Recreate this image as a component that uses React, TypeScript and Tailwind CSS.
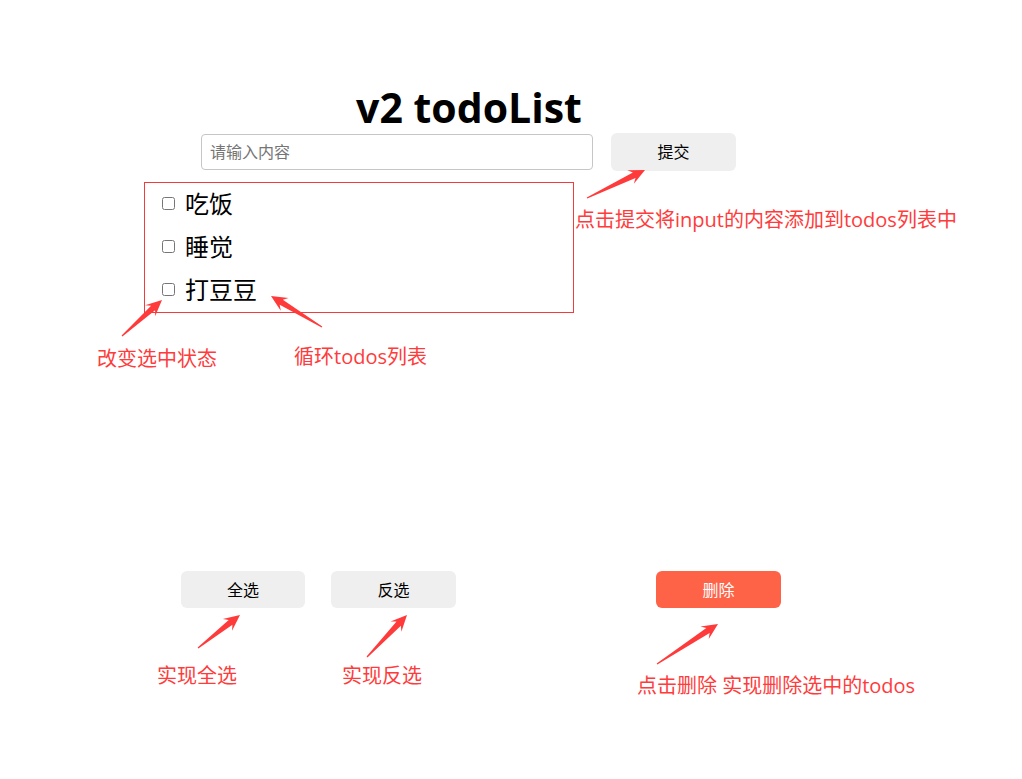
import React, { useState } from 'react';

type Todo = { id: number; text: string; done: boolean };

// annotation arrows: tail -> tip
const ARROWS: [number, number, number, number][] = [
  [587, 198, 645, 170],
  [122, 336, 162, 300],
  [322, 327, 271, 296],
  [198, 648, 240, 615],
  [367, 657, 407, 615],
  [657, 664, 718, 624],
];

function arrowPoints(x1: number, y1: number, x2: number, y2: number) {
  const len = Math.hypot(x2 - x1, y2 - y1);
  const dx = (x2 - x1) / len;
  const dy = (y2 - y1) / len;
  const nx = -dy;
  const ny = dx;
  const pt = (bx: number, by: number, off: number) => `${bx + nx * off},${by + ny * off}`;
  const b1x = x2 - dx * 12;
  const b1y = y2 - dy * 12;
  const b2x = x2 - dx * 16;
  const b2y = y2 - dy * 16;
  return [
    pt(x1, y1, 0.6),
    pt(b1x, b1y, 3),
    pt(b2x, b2y, 7.5),
    `${x2},${y2}`,
    pt(b2x, b2y, -7.5),
    pt(b1x, b1y, -3),
    pt(x1, y1, -0.6),
  ].join(' ');
}

const font = { fontFamily: '"Open Sans", "Noto Sans CJK SC", sans-serif' };

export default function App() {
  const [todos, setTodos] = useState<Todo[]>([
    { id: 1, text: '吃饭', done: false },
    { id: 2, text: '睡觉', done: false },
    { id: 3, text: '打豆豆', done: false },
  ]);
  const [value, setValue] = useState('');

  const add = () => {
    if (!value.trim()) return;
    setTodos([...todos, { id: Date.now(), text: value, done: false }]);
    setValue('');
  };
  const toggle = (id: number) =>
    setTodos(todos.map(t => (t.id === id ? { ...t, done: !t.done } : t)));
  const selectAll = () => setTodos(todos.map(t => ({ ...t, done: true })));
  const invert = () => setTodos(todos.map(t => ({ ...t, done: !t.done })));
  const remove = () => setTodos(todos.filter(t => !t.done));

  return (
    <div className="relative w-[1022px] h-[779px] bg-white text-black" style={font}>
      <div className="pt-[83px]">
        <h1 className="w-[938px] text-center text-[41px] leading-[48px] font-bold">v2 todoList</h1>

        <div className="flex items-center gap-[18px] pl-[201px] mt-[2px]">
          <input
            value={value}
            onChange={e => setValue(e.target.value)}
            placeholder="请输入内容"
            className="w-[392px] h-[36px] border border-[#c6c6c6] rounded-[4px] px-[8px] text-[16px] placeholder:text-[#757575] outline-none"
          />
          <button
            onClick={add}
            className="w-[125px] h-[38px] bg-[#efefef] rounded-[6px] text-[16px]"
          >
            提交
          </button>
        </div>

        <ul className="ml-[144px] mt-[11px] w-[430px] h-[131px] border border-[#f03c3c]">
          {todos.map(t => (
            <li key={t.id} className="flex items-center h-[43px] pl-[17px] pb-[3px] gap-[10px]">
              <input
                type="checkbox"
                checked={t.done}
                onChange={() => toggle(t.id)}
                className="w-[13px] h-[13px] m-0"
              />
              <span className="text-[24px] leading-none" style={{ fontFamily: '"Noto Sans CJK SC", sans-serif' }}>
                {t.text}
              </span>
            </li>
          ))}
        </ul>

        <div className="flex pl-[181px] mt-[258px]">
          <button onClick={selectAll} className="w-[124px] h-[37px] bg-[#efefef] rounded-[6px] text-[16px]">
            全选
          </button>
          <button onClick={invert} className="ml-[26px] w-[125px] h-[37px] bg-[#efefef] rounded-[6px] text-[16px]">
            反选
          </button>
          <button onClick={remove} className="ml-[200px] w-[125px] h-[37px] bg-[#ff6347] text-white rounded-[6px] text-[16px]">
            删除
          </button>
        </div>
      </div>

      {/* annotations */}
      <svg className="absolute inset-0 pointer-events-none" width="1022" height="779">
        {ARROWS.map((a, i) => (
          <polygon key={i} points={arrowPoints(a[0], a[1], a[2], a[3])} fill="#ff3a3a" />
        ))}
      </svg>
      <div className="absolute inset-0 pointer-events-none text-[20px] leading-[20px] text-[#ff3b3b]">
        <span className="absolute left-[575px] top-[210px] whitespace-nowrap">点击提交将input的内容添加到todos列表中</span>
        <span className="absolute left-[97px] top-[349px] whitespace-nowrap">改变选中状态</span>
        <span className="absolute left-[294px] top-[347px] whitespace-nowrap">循环todos列表</span>
        <span className="absolute left-[157px] top-[666px] whitespace-nowrap">实现全选</span>
        <span className="absolute left-[342px] top-[666px] whitespace-nowrap">实现反选</span>
        <span className="absolute left-[637px] top-[676px] whitespace-nowrap">点击删除 实现删除选中的todos</span>
      </div>
    </div>
  );
}
